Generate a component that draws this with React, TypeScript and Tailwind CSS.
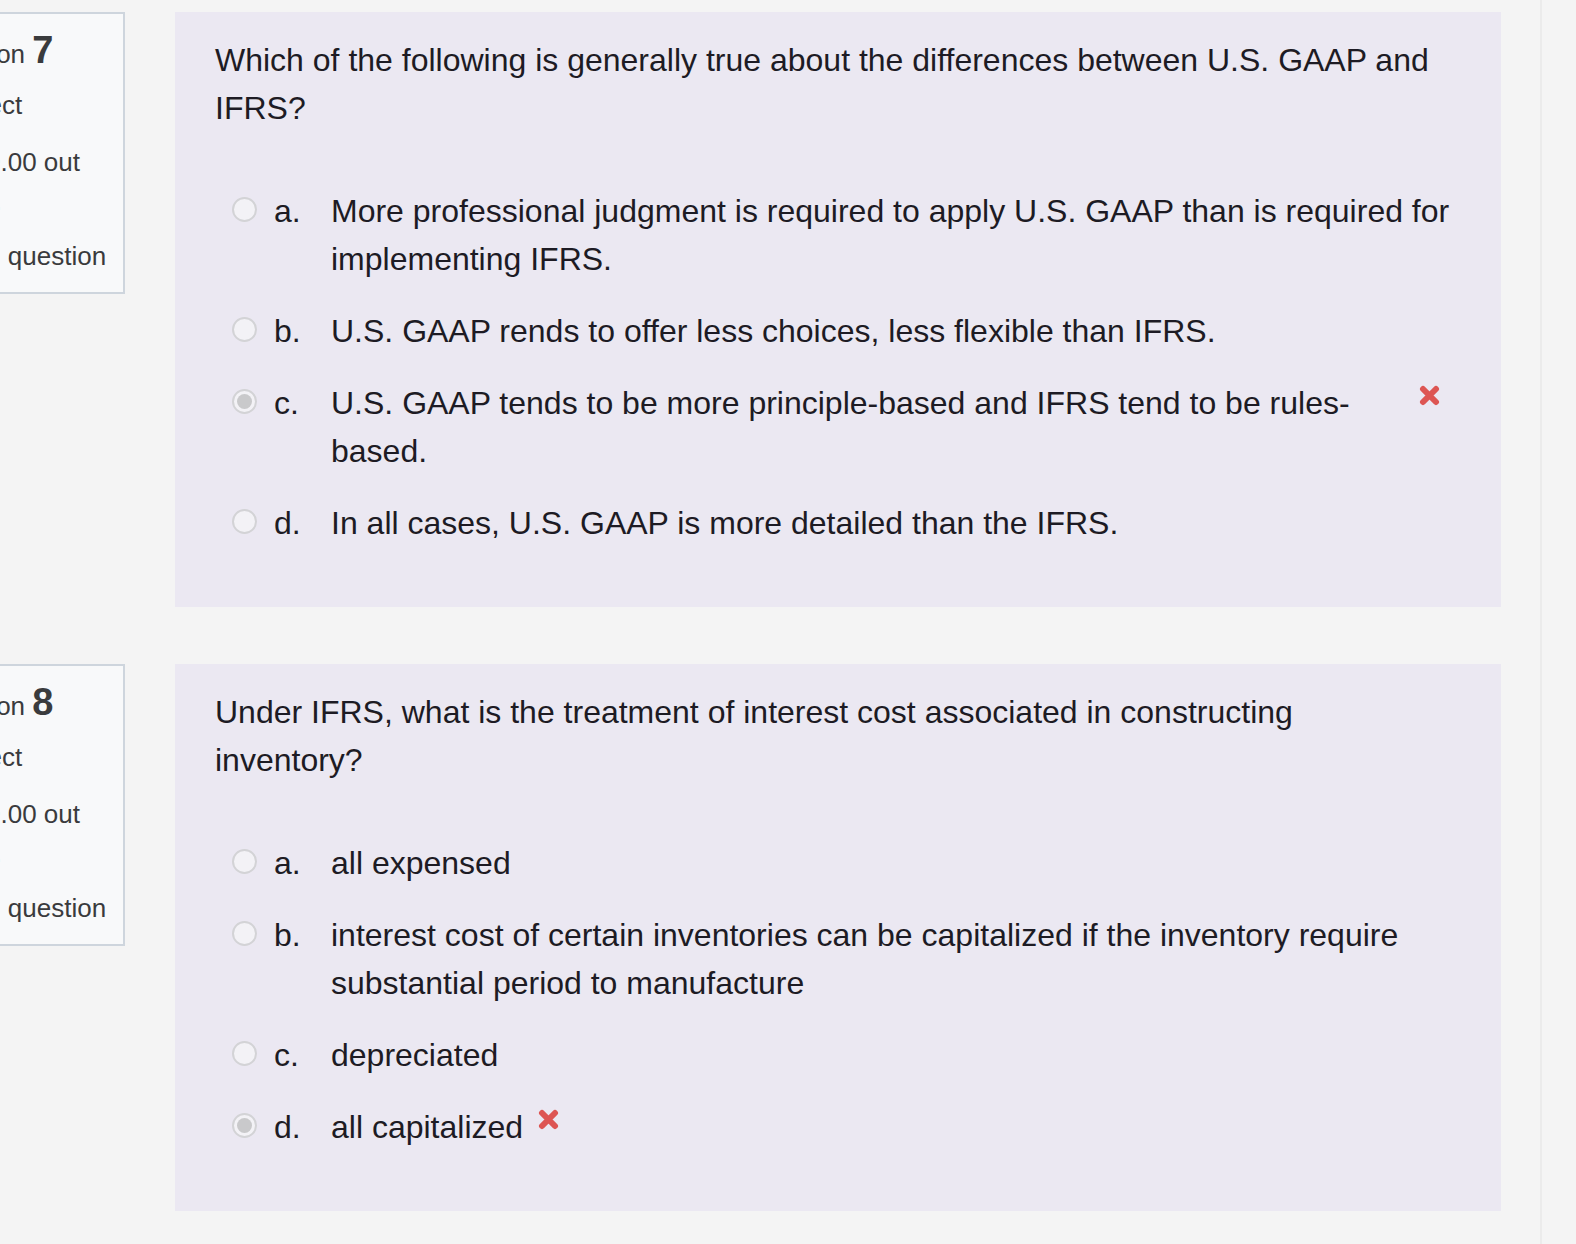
import React from "react";

type Option = {
  letter: string;
  text: string;
  checked?: boolean;
  wrong?: boolean;
};

type Question = {
  no: number;
  text: string;
  options: Option[];
};

const QUESTIONS: Question[] = [
  {
    no: 7,
    text: "Which of the following is generally true about the differences between U.S. GAAP and IFRS?",
    options: [
      { letter: "a.", text: "More professional judgment is required to apply U.S. GAAP than is required for implementing IFRS." },
      { letter: "b.", text: "U.S. GAAP rends to offer less choices, less flexible than IFRS." },
      { letter: "c.", text: "U.S. GAAP tends to be more principle-based and IFRS tend to be rules-based.", checked: true, wrong: true },
      { letter: "d.", text: "In all cases, U.S. GAAP is more detailed than the IFRS." },
    ],
  },
  {
    no: 8,
    text: "Under IFRS, what is the treatment of interest cost associated in constructing inventory?",
    options: [
      { letter: "a.", text: "all expensed" },
      { letter: "b.", text: "interest cost of certain inventories can be capitalized if the inventory require substantial period to manufacture" },
      { letter: "c.", text: "depreciated" },
      { letter: "d.", text: "all capitalized", checked: true, wrong: true },
    ],
  },
];

function Radio({ checked }: { checked?: boolean }) {
  return (
    <span className="mt-[10px] flex h-[25px] w-[25px] shrink-0 items-center justify-center rounded-full border-2 border-[#d3d3d6] bg-[#f3f2f6]">
      {checked && <span className="h-[15px] w-[15px] rounded-full bg-[#c9c9cb]" />}
    </span>
  );
}

function WrongIcon() {
  return (
    <span className="ml-[11px] mr-[15px] mt-[6px] flex h-[21px] w-[28px] shrink-0 justify-center">
      <svg width="21" height="21" viewBox="0 0 21 21">
        <path d="M4 4 L17 17 M17 4 L4 17" stroke="#dd5553" strokeWidth="6" strokeLinecap="round" />
      </svg>
    </span>
  );
}

function InfoBox({ no }: { no: number }) {
  return (
    <div className="ml-[-90px] w-[215px] shrink-0 border-2 border-[#ced5dd] bg-[#f8f9fa] pb-[12px] pl-[9px] pr-[16px] pt-[17px] text-[26px] text-[#3a3b3d]">
      <div className="leading-none whitespace-nowrap">
        Question <span className="text-[38px] font-bold">{no}</span>
      </div>
      <div className="mt-[13px] leading-[47px]">Incorrect</div>
      <div className="mt-[10px] leading-[47px]">Mark 0.00 out of 1.00</div>
      <div className="whitespace-nowrap pl-[29px] leading-[47px]">Flag question</div>
    </div>
  );
}

function QuestionPanel({ q }: { q: Question }) {
  return (
    <div className="ml-[50px] w-[1326px] shrink-0 bg-[#ebe8f2] pb-[60px] pl-[40px] pr-[43px] pt-[24px] text-[32px] leading-[48px] text-[#1d1b24]">
      <div className="pr-[16px]">{q.text}</div>
      <div className="mt-[55px] flex flex-col gap-[24px]">
        {q.options.map((o) => (
          <div key={o.letter} className="flex items-start pl-[17px]">
            <Radio checked={o.checked} />
            <div className="ml-[17px] flex min-w-0">
              <span className="w-[57px] shrink-0">{o.letter}</span>
              <span className="min-w-0">{o.text}</span>
            </div>
            {o.wrong && <WrongIcon />}
          </div>
        ))}
      </div>
    </div>
  );
}

export default function App() {
  return (
    <div className="flex min-h-screen overflow-hidden bg-[#f4f4f4] font-['Liberation_Sans',Arial,sans-serif]">
      <div className="w-[1542px] shrink-0 border-r-2 border-[#ebebeb] pt-[12px]">
        <div className="flex flex-col gap-[57px]">
          {QUESTIONS.map((q) => (
            <div key={q.no} className="flex items-start">
              <InfoBox no={q.no} />
              <QuestionPanel q={q} />
            </div>
          ))}
        </div>
      </div>
    </div>
  );
}
